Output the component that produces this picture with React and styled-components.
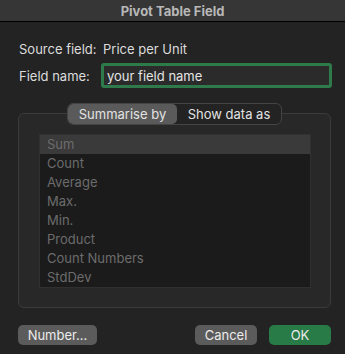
import React, { useState } from "react";
import styled, { createGlobalStyle } from "styled-components";

const Global = createGlobalStyle`
  html, body {
    margin: 0;
    padding: 0;
    background: #232323;
  }
  body {
    font-family: Inter, "Noto Sans", "Liberation Sans", sans-serif;
    font-size: 13px;
    -webkit-font-smoothing: antialiased;
  }
`;

const Window = styled.div`
  width: 345px;
  height: 354px;
  background: #232323;
  display: flex;
  flex-direction: column;
  overflow: hidden;
`;

const TitleBar = styled.div`
  height: 21px;
  background: #363636;
  border-bottom: 1px solid #000;
  display: flex;
  align-items: center;
  justify-content: center;
  color: #b8b8b8;
  font-weight: 700;
  font-size: 13px;
`;

const Content = styled.div`
  padding: 18px 14px 0 18px;
  display: flex;
  flex-direction: column;
`;

const Form = styled.div`
  display: grid;
  grid-template-columns: 83px 1fr;
  row-gap: 5px;
  align-items: center;
  color: #dcdcdc;
`;

const Label = styled.div`
  padding-left: 1px;
  line-height: 18px;
`;

const Value = styled.div`
  padding-left: 2px;
  line-height: 18px;
`;

const Input = styled.input`
  box-sizing: border-box;
  height: 25px;
  width: 231px;
  background: #2b2b2b;
  border: 3px solid #2e7a4b;
  border-radius: 3px;
  color: #e4e4e4;
  font: inherit;
  padding: 0 3px;
  outline: none;
`;

const Group = styled.div`
  margin-top: 15px;
  display: flex;
  flex-direction: column;
  align-items: center;
`;

const Segmented = styled.div`
  position: relative;
  z-index: 1;
  display: flex;
  height: 22px;
  box-sizing: border-box;
  border: 1px solid #444;
  border-radius: 6px;
  background: #232323;
  overflow: hidden;
`;

const Segment = styled.button`
  width: ${p => p.$w}px;
  border: none;
  background: ${p => (p.$active ? "#5a5a5a" : "transparent")};
  color: #e2e2e2;
  font: inherit;
  padding: 0;
  border-radius: 5px;
  cursor: pointer;
`;

const Box = styled.div`
  align-self: stretch;
  margin-top: -12px;
  height: 195px;
  box-sizing: border-box;
  border: 1px solid #3b3b3b;
  border-radius: 6px;
  background: #282828;
  padding: 20px 19px 0 20px;
`;

const List = styled.ul`
  list-style: none;
  margin: 0;
  padding: 0;
  height: 154px;
  box-sizing: border-box;
  background: #1b1b1b;
  border: 1px solid #303030;
`;

const Item = styled.li`
  height: 19px;
  line-height: 19px;
  padding-left: 7px;
  color: #6c6c6c;
  background: ${p => (p.$selected ? "#3a3a3a" : "transparent")};
`;

const Buttons = styled.div`
  margin-top: 17px;
  display: flex;
  align-items: center;
`;

const Button = styled.button`
  height: 20px;
  width: ${p => p.$w}px;
  border: none;
  border-radius: 5px;
  background: ${p => (p.$primary ? "#287a46" : "#5b5b5b")};
  color: #ececec;
  font: inherit;
  padding: 0;
  margin-left: ${p => p.$ml || 0}px;
  cursor: pointer;
`;

const functions = [
  "Sum",
  "Count",
  "Average",
  "Max.",
  "Min.",
  "Product",
  "Count Numbers",
  "StdDev",
];

export default function App() {
  const [tab, setTab] = useState(0);
  const [name, setName] = useState("your field name");
  return (
    <Window>
      <Global />
      <TitleBar>Pivot Table Field</TitleBar>
      <Content>
        <Form>
          <Label>Source field:</Label>
          <Value>Price per Unit</Value>
          <Label>Field name:</Label>
          <Input value={name} onChange={e => setName(e.target.value)} />
        </Form>
        <Group>
          <Segmented>
            <Segment $w={109} $active={tab === 0} onClick={() => setTab(0)}>
              Summarise by
            </Segment>
            <Segment $w={104} $active={tab === 1} onClick={() => setTab(1)}>
              Show data as
            </Segment>
          </Segmented>
          <Box>
            <List>
              {functions.map((f, i) => (
                <Item key={f} $selected={i === 0}>
                  {f}
                </Item>
              ))}
            </List>
          </Box>
        </Group>
        <Buttons>
          <Button $w={79}>Number...</Button>
          <Button $w={62} $ml={98}>Cancel</Button>
          <Button $w={62} $ml={12} $primary>
            OK
          </Button>
        </Buttons>
      </Content>
    </Window>
  );
}
